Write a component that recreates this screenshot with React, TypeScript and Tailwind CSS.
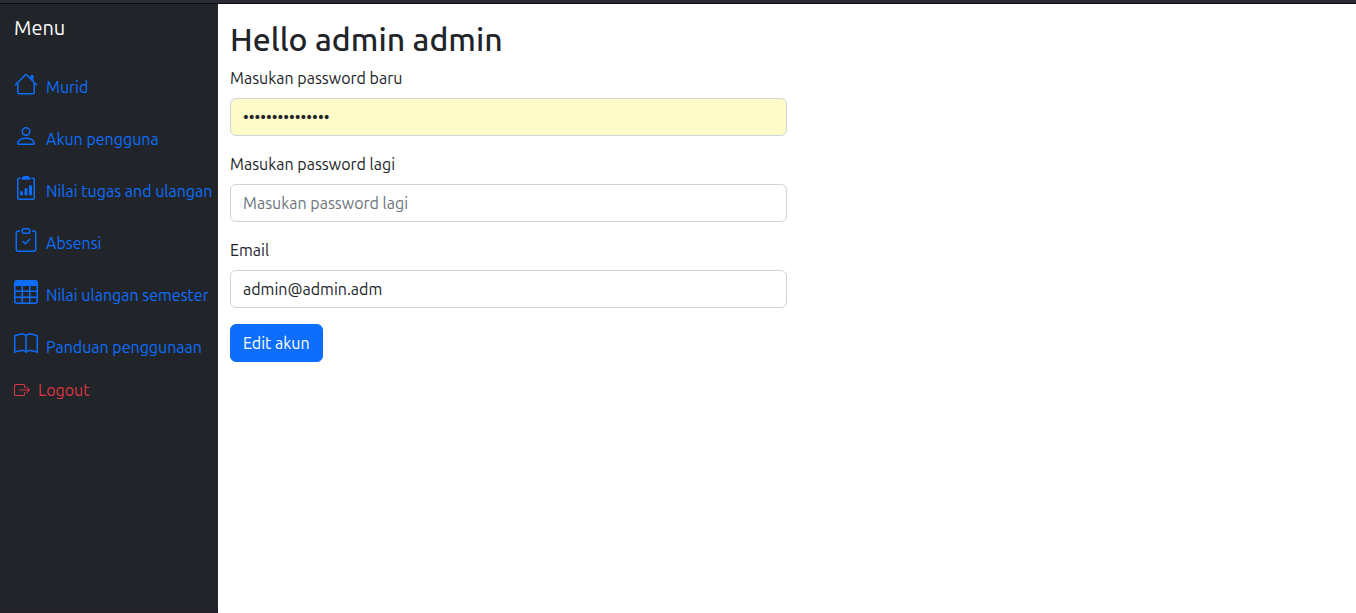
import type { ComponentType } from "react";
import {
  BsBook,
  BsBoxArrowRight,
  BsClipboard2Data,
  BsClipboardCheck,
  BsPerson,
  BsTable,
} from "react-icons/bs";

type IconProps = { className?: string };

function HouseIcon({ className }: IconProps) {
  return (
    <svg className={className} viewBox="0 0 16 16" fill="currentColor" aria-hidden="true">
      <path
        fillRule="evenodd"
        d="M2 13.5V7h1v6.5a.5.5 0 0 0 .5.5h9a.5.5 0 0 0 .5-.5V7h1v6.5a1.5 1.5 0 0 1-1.5 1.5h-9A1.5 1.5 0 0 1 2 13.5zm11-11V6l-2-2V2.5a.5.5 0 0 1 .5-.5h1a.5.5 0 0 1 .5.5z"
      />
      <path
        fillRule="evenodd"
        d="M7.293 1.5a1 1 0 0 1 1.414 0l6.647 6.646a.5.5 0 0 1-.708.708L8 2.207 1.354 8.854a.5.5 0 1 1-.708-.708L7.293 1.5z"
      />
    </svg>
  );
}

const links: { label: string; icon: ComponentType<IconProps> }[] = [
  { label: "Murid", icon: HouseIcon },
  { label: "Akun pengguna", icon: BsPerson },
  { label: "Nilai tugas and ulangan", icon: BsClipboard2Data },
  { label: "Absensi", icon: BsClipboardCheck },
  { label: "Nilai ulangan semester", icon: BsTable },
  { label: "Panduan penggunaan", icon: BsBook },
];

function Sidebar() {
  return (
    <aside className="w-[218px] shrink-0 border-b-2 border-[#201e28] bg-[#212529] pl-3.5">
      <a href="#" className="block pt-2 pb-4 text-[20px] leading-8 text-white">
        Menu
      </a>
      <nav>
        <ul>
          {links.map(({ label, icon: Icon }) => (
            <li key={label}>
              <a href="#" className="flex h-13 gap-2 pt-3 whitespace-nowrap text-[#0d6efd]">
                <Icon className="size-6 shrink-0" />
                <span className="pt-[3px]">{label}</span>
              </a>
            </li>
          ))}
        </ul>
        <a href="#" className="mt-1.5 flex items-center gap-2 text-[#dc3545]">
          <BsBoxArrowRight className="size-4" />
          Logout
        </a>
      </nav>
    </aside>
  );
}

type FieldProps = {
  id: string;
  label: string;
  type: string;
  defaultValue?: string;
  placeholder?: string;
  filled?: boolean;
};

function Field({ id, label, type, defaultValue, placeholder, filled }: FieldProps) {
  return (
    <div className="mb-4">
      <label htmlFor={id} className="mb-2 block">
        {label}
      </label>
      <input
        id={id}
        type={type}
        defaultValue={defaultValue}
        placeholder={placeholder}
        className={`block h-[38px] w-full rounded-md border border-[#ced4da] px-3 placeholder:text-[#6c757d] ${
          filled ? "bg-[#fffbc8]" : "bg-white"
        }`}
      />
    </div>
  );
}

export default function App() {
  return (
    <div className="flex min-h-screen flex-col bg-white font-['Ubuntu','Noto_Sans',sans-serif] text-[16px] leading-6 text-[#212529]">
      <div className="h-1 border-b border-[#0c0c0d] bg-[#2b2a33]" />
      <div className="flex grow">
        <Sidebar />
        <main className="grow px-3 pt-4">
          <h1 className="mb-2 text-[32px] leading-[38px] font-medium">Hello admin admin</h1>
          <form className="w-1/2" onSubmit={(e) => e.preventDefault()}>
            <Field
              id="password"
              label="Masukan password baru"
              type="password"
              defaultValue="adminadminadmin"
              filled
            />
            <Field
              id="password-confirm"
              label="Masukan password lagi"
              type="password"
              placeholder="Masukan password lagi"
            />
            <Field id="email" label="Email" type="email" defaultValue="admin@admin.adm" />
            <button
              type="submit"
              className="h-[38px] rounded-md border border-[#0d6efd] bg-[#0d6efd] px-3 text-white"
            >
              Edit akun
            </button>
          </form>
        </main>
      </div>
    </div>
  );
}
